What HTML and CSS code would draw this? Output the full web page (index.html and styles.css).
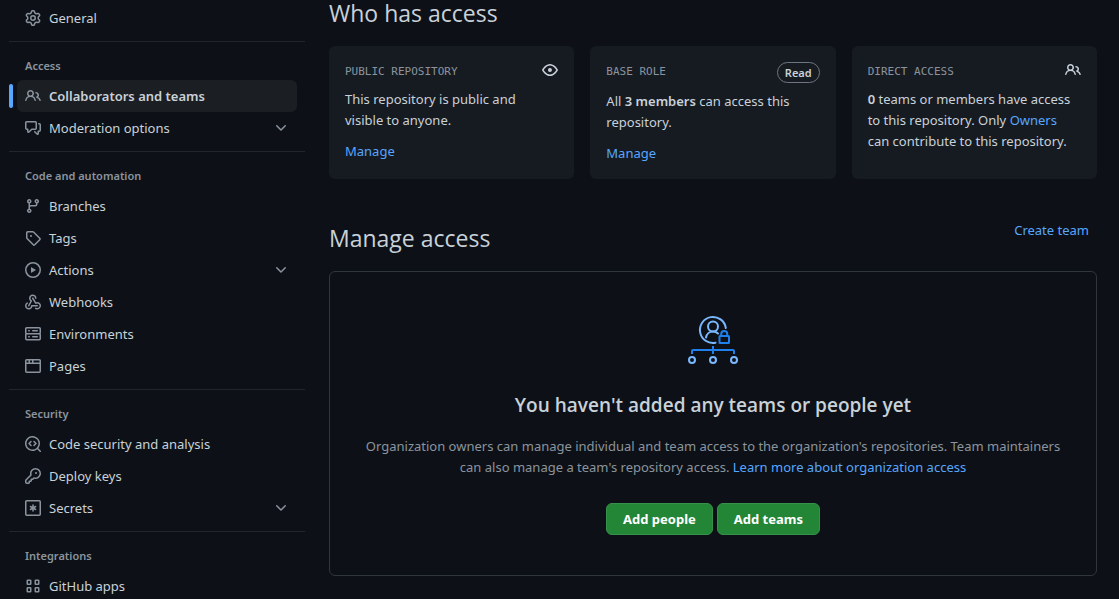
FILE: index.html
```html
<!DOCTYPE html>
<html lang="en">
<head>
<meta charset="utf-8">
<title>Collaborators and teams</title>
<link rel="stylesheet" href="styles.css">
</head>
<body>
<svg class="sprite" aria-hidden="true">
  <symbol id="gear" viewBox="0 0 16 16"><path d="M8 0a8.2 8.2 0 0 1 .701.031C9.444.095 9.99.645 10.16 1.29l.288 1.107c.018.066.079.158.212.224.231.114.454.243.668.386.123.082.233.09.299.071l1.103-.303c.644-.176 1.392.021 1.82.63.27.385.506.792.704 1.218.315.675.111 1.422-.364 1.891l-.814.806c-.049.048-.098.147-.088.294.016.257.016.515 0 .772-.01.147.038.246.088.294l.814.806c.475.469.679 1.216.364 1.891a7.977 7.977 0 0 1-.704 1.217c-.428.61-1.176.807-1.82.63l-1.102-.302c-.067-.019-.177-.011-.3.071a5.909 5.909 0 0 1-.668.386c-.133.066-.194.158-.211.224l-.29 1.106c-.168.646-.715 1.196-1.458 1.26a8.006 8.006 0 0 1-1.402 0c-.743-.064-1.289-.614-1.458-1.26l-.289-1.106c-.018-.066-.079-.158-.212-.224a5.738 5.738 0 0 1-.668-.386c-.123-.082-.233-.09-.299-.071l-1.103.303c-.644.176-1.392-.021-1.82-.63a8.12 8.12 0 0 1-.704-1.218c-.315-.675-.111-1.422.363-1.891l.815-.806c.05-.048.098-.147.088-.294a6.214 6.214 0 0 1 0-.772c.01-.147-.038-.246-.088-.294l-.815-.806C.635 6.045.431 5.298.746 4.623a7.92 7.92 0 0 1 .704-1.217c.428-.61 1.176-.807 1.82-.63l1.102.302c.067.019.177.011.3-.071.214-.143.437-.272.668-.386.133-.066.194-.158.211-.224l.29-1.106C6.009.645 6.556.095 7.299.03 7.53.01 7.764 0 8 0Zm-.571 1.525c-.036.003-.108.036-.137.146l-.289 1.105c-.147.561-.549.967-.998 1.189-.173.086-.34.183-.5.29-.417.278-.97.423-1.529.27l-1.103-.303c-.109-.03-.175.016-.195.045-.22.312-.412.644-.573.99-.014.031-.021.11.059.19l.815.806c.411.406.562.957.53 1.456a4.709 4.709 0 0 0 0 .582c.032.499-.119 1.05-.53 1.456l-.815.806c-.081.08-.073.159-.059.19.162.346.353.677.573.989.02.03.085.076.195.046l1.102-.303c.56-.153 1.113-.008 1.53.27.161.107.328.204.501.29.447.222.85.629.997 1.189l.289 1.105c.029.109.101.143.137.146a6.6 6.6 0 0 0 1.142 0c.036-.003.108-.036.137-.146l.289-1.105c.147-.561.549-.967.998-1.189.173-.086.34-.183.5-.29.417-.278.97-.423 1.529-.27l1.103.303c.109.029.175-.016.195-.045.22-.313.411-.644.573-.99.014-.031.021-.11-.059-.19l-.815-.806c-.411-.406-.562-.957-.53-1.456a4.709 4.709 0 0 0 0-.582c-.032-.499.119-1.05.53-1.456l.815-.806c.081-.08.073-.159.059-.19a6.464 6.464 0 0 0-.573-.989c-.02-.03-.085-.076-.195-.046l-1.102.303c-.56.153-1.113.008-1.53-.27a4.44 4.44 0 0 0-.501-.29c-.447-.222-.85-.629-.997-1.189l-.289-1.105c-.029-.11-.101-.143-.137-.146a6.6 6.6 0 0 0-1.142 0ZM11 8a3 3 0 1 1-6 0 3 3 0 0 1 6 0ZM9.5 8a1.5 1.5 0 1 0-3.001.001A1.5 1.5 0 0 0 9.5 8Z"/></symbol>
  <symbol id="people" viewBox="0 0 16 16"><path d="M2 5.5a3.5 3.5 0 1 1 5.898 2.549 5.508 5.508 0 0 1 3.034 4.084.75.75 0 1 1-1.482.235 4 4 0 0 0-7.9 0 .75.75 0 0 1-1.482-.236A5.507 5.507 0 0 1 3.102 8.05 3.493 3.493 0 0 1 2 5.5ZM11 4a3.001 3.001 0 0 1 2.22 5.018 5.01 5.01 0 0 1 2.56 3.012.749.749 0 0 1-.885.954.752.752 0 0 1-.549-.514 3.507 3.507 0 0 0-2.522-2.372.75.75 0 0 1-.574-.73v-.352a.75.75 0 0 1 .416-.672A1.5 1.5 0 0 0 11 5.5.75.75 0 0 1 11 4Zm-5.5-.5a2 2 0 1 0-.001 3.999A2 2 0 0 0 5.5 3.5Z"/></symbol>
  <symbol id="discussion" viewBox="0 0 16 16"><path d="M1.75 1h8.5c.966 0 1.75.784 1.75 1.75v5.5A1.75 1.75 0 0 1 10.25 10H7.061l-2.574 2.573A1.458 1.458 0 0 1 2 11.543V10h-.25A1.75 1.75 0 0 1 0 8.25v-5.5C0 1.784.784 1 1.75 1ZM1.5 2.75v5.5c0 .138.112.25.25.25h1a.75.75 0 0 1 .75.75v2.19l2.72-2.72a.749.749 0 0 1 .53-.22h3.5a.25.25 0 0 0 .25-.25v-5.5a.25.25 0 0 0-.25-.25h-8.5a.25.25 0 0 0-.25.25Zm13 2a.25.25 0 0 0-.25-.25h-.5a.75.75 0 0 1 0-1.5h.5c.966 0 1.75.784 1.75 1.75v5.5A1.75 1.75 0 0 1 14.25 12H14v1.543a1.458 1.458 0 0 1-2.487 1.03L9.22 12.28a.749.749 0 0 1 .326-1.275.749.749 0 0 1 .734.215l2.22 2.22v-2.19a.75.75 0 0 1 .75-.75h1a.25.25 0 0 0 .25-.25Z"/></symbol>
  <symbol id="branch" viewBox="0 0 16 16"><path d="M9.5 3.25a2.25 2.25 0 1 1 3 2.122V6A2.5 2.5 0 0 1 10 8.5H6a1 1 0 0 0-1 1v1.128a2.251 2.251 0 1 1-1.5 0V5.372a2.25 2.25 0 1 1 1.5 0v1.836A2.493 2.493 0 0 1 6 7h4a1 1 0 0 0 1-1v-.628A2.25 2.25 0 0 1 9.5 3.25Zm-6 0a.75.75 0 1 0 1.5 0 .75.75 0 0 0-1.5 0Zm8.25-.75a.75.75 0 1 0 0 1.5.75.75 0 0 0 0-1.5ZM4.25 12a.75.75 0 1 0 0 1.5.75.75 0 0 0 0-1.5Z"/></symbol>
  <symbol id="tag" viewBox="0 0 16 16"><path d="M1 7.775V2.75C1 1.784 1.784 1 2.75 1h5.025c.464 0 .91.184 1.238.513l6.25 6.25a1.75 1.75 0 0 1 0 2.474l-5.026 5.026a1.75 1.75 0 0 1-2.474 0l-6.25-6.25A1.752 1.752 0 0 1 1 7.775Zm1.5 0c0 .066.026.13.073.177l6.25 6.25a.25.25 0 0 0 .354 0l5.025-5.025a.25.25 0 0 0 0-.354l-6.25-6.25a.25.25 0 0 0-.177-.073H2.75a.25.25 0 0 0-.25.25ZM6 5a1 1 0 1 1 0 2 1 1 0 0 1 0-2Z"/></symbol>
  <symbol id="play" viewBox="0 0 16 16"><path d="M8 0a8 8 0 1 1 0 16A8 8 0 0 1 8 0ZM1.5 8a6.5 6.5 0 1 0 13 0 6.5 6.5 0 0 0-13 0Zm4.879-2.773 4.264 2.559a.25.25 0 0 1 0 .428l-4.264 2.559A.25.25 0 0 1 6 10.559V5.442a.25.25 0 0 1 .379-.215Z"/></symbol>
  <symbol id="webhook" viewBox="0 0 16 16"><path d="M5.5 4.25a2.25 2.25 0 0 1 4.5 0 .75.75 0 0 0 1.5 0 3.75 3.75 0 1 0-6.14 2.889l-2.272 4.258a.75.75 0 0 0 1.324.706L7 7.25a.75.75 0 0 0-.309-1.015A2.25 2.25 0 0 1 5.5 4.25Z"/><path d="M7.364 3.607a.75.75 0 0 1 1.03.257l2.608 4.349a3.75 3.75 0 1 1-.628 6.785.75.75 0 0 1 .752-1.299 2.25 2.25 0 1 0-.033-3.88.75.75 0 0 1-1.03-.256L7.107 4.636a.75.75 0 0 1 .257-1.03Z"/><path d="M2.9 8.776A.75.75 0 0 1 2.625 9.8 2.25 2.25 0 1 0 6 11.75a.75.75 0 0 1 .75-.751h5.5a.75.75 0 0 1 0 1.5H7.425a3.751 3.751 0 1 1-5.55-3.998.75.75 0 0 1 1.024.274Z"/></symbol>
  <symbol id="server" viewBox="0 0 16 16"><path d="M1.75 1h12.5c.966 0 1.75.784 1.75 1.75v4c0 .372-.116.717-.314 1 .198.283.314.628.314 1v4a1.75 1.75 0 0 1-1.75 1.75H1.75A1.75 1.75 0 0 1 0 12.75v-4c0-.358.109-.707.314-1a1.739 1.739 0 0 1-.314-1v-4C0 1.784.784 1 1.75 1ZM1.5 2.75v4c0 .138.112.25.25.25h12.5a.25.25 0 0 0 .25-.25v-4a.25.25 0 0 0-.25-.25H1.75a.25.25 0 0 0-.25.25Zm.25 5.75a.25.25 0 0 0-.25.25v4c0 .138.112.25.25.25h12.5a.25.25 0 0 0 .25-.25v-4a.25.25 0 0 0-.25-.25ZM7 4.75A.75.75 0 0 1 7.75 4h4.5a.75.75 0 0 1 0 1.5h-4.5A.75.75 0 0 1 7 4.75ZM7.75 10h4.5a.75.75 0 0 1 0 1.5h-4.5a.75.75 0 0 1 0-1.5ZM3 4.75A.75.75 0 0 1 3.75 4h.5a.75.75 0 0 1 0 1.5h-.5A.75.75 0 0 1 3 4.75ZM3.75 10h.5a.75.75 0 0 1 0 1.5h-.5a.75.75 0 0 1 0-1.5Z"/></symbol>
  <symbol id="browser" viewBox="0 0 16 16"><path d="M0 2.75C0 1.784.784 1 1.75 1h12.5c.966 0 1.75.784 1.75 1.75v10.5A1.75 1.75 0 0 1 14.25 15H1.75A1.75 1.75 0 0 1 0 13.25ZM14.5 6h-13v7.25c0 .138.112.25.25.25h12.5a.25.25 0 0 0 .25-.25Zm-6-3.5v2h6V2.75a.25.25 0 0 0-.25-.25ZM5 2.5v2h2v-2Zm-3.25 0a.25.25 0 0 0-.25.25V4.5h2v-2Z"/></symbol>
  <symbol id="codescan" viewBox="0 0 16 16"><path d="M8.47 4.97a.75.75 0 0 0 0 1.06L9.94 7.5 8.47 8.97a.75.75 0 1 0 1.06 1.06l2-2a.75.75 0 0 0 0-1.06l-2-2a.75.75 0 0 0-1.06 0ZM6.53 6.03a.75.75 0 0 0-1.06-1.06l-2 2a.75.75 0 0 0 0 1.06l2 2a.75.75 0 1 0 1.06-1.06L5.06 7.5Z"/><path d="M12.246 13.307a7.501 7.501 0 1 1 1.06-1.06l2.474 2.473a.749.749 0 1 1-1.06 1.06ZM1.5 7.5a6.002 6.002 0 0 0 3.608 5.504 6.002 6.002 0 0 0 6.486-1.117.748.748 0 0 1 .292-.293A6 6 0 1 0 1.5 7.5Z"/></symbol>
  <symbol id="key" viewBox="0 0 16 16"><path d="M10.5 0a5.499 5.499 0 1 1-1.288 10.848l-.932.932a.749.749 0 0 1-.53.22H7v.75a.749.749 0 0 1-.22.53l-.5.5a.749.749 0 0 1-.53.22H5v.75a.749.749 0 0 1-.22.53l-.5.5a.749.749 0 0 1-.53.22h-2A1.75 1.75 0 0 1 0 14.25v-2c0-.199.079-.389.22-.53l4.932-4.932A5.5 5.5 0 0 1 10.5 0Zm-4 5.5c-.001.431.069.86.205 1.269a.75.75 0 0 1-.181.768L1.5 12.56v1.69c0 .138.112.25.25.25h1.69l.06-.06v-1.19a.75.75 0 0 1 .75-.75h1.19l.06-.06v-1.19a.75.75 0 0 1 .75-.75h1.19l1.023-1.025a.75.75 0 0 1 .768-.18A4 4 0 1 0 6.5 5.5ZM11 6a1 1 0 1 1 0-2 1 1 0 0 1 0 2Z"/></symbol>
  <symbol id="secret" viewBox="0 0 16 16"><path fill="none" stroke="currentColor" stroke-width="1.5" stroke-linecap="round" d="M1.75.75h12.5a1 1 0 0 1 1 1v12.5a1 1 0 0 1-1 1H1.75a1 1 0 0 1-1-1V1.75a1 1 0 0 1 1-1ZM8 5v6M5.4 6.5l5.2 3M10.6 6.5l-5.2 3"/></symbol>
  <symbol id="apps" viewBox="0 0 16 16"><path fill="none" stroke="currentColor" stroke-width="1.5" stroke-linejoin="round" d="M2.75 2.25h2.5a.5.5 0 0 1 .5.5v3a.5.5 0 0 1-.5.5h-2.5a.5.5 0 0 1-.5-.5v-3a.5.5 0 0 1 .5-.5ZM10.75 2.25h2.5a.5.5 0 0 1 .5.5v3a.5.5 0 0 1-.5.5h-2.5a.5.5 0 0 1-.5-.5v-3a.5.5 0 0 1 .5-.5ZM2.75 9.75h2.5a.5.5 0 0 1 .5.5v3a.5.5 0 0 1-.5.5h-2.5a.5.5 0 0 1-.5-.5v-3a.5.5 0 0 1 .5-.5ZM10.75 9.75h2.5a.5.5 0 0 1 .5.5v3a.5.5 0 0 1-.5.5h-2.5a.5.5 0 0 1-.5-.5v-3a.5.5 0 0 1 .5-.5Z"/></symbol>
  <symbol id="chevron" viewBox="0 0 16 16"><path d="M12.78 5.22a.749.749 0 0 1 0 1.06l-4.25 4.25a.749.749 0 0 1-1.06 0L3.22 6.28a.749.749 0 1 1 1.06-1.06L8 8.939l3.72-3.719a.749.749 0 0 1 1.06 0Z"/></symbol>
  <symbol id="eye" viewBox="0 0 16 16"><path d="M8 2c1.981 0 3.671.992 4.933 2.078 1.27 1.091 2.187 2.345 2.637 3.023a1.62 1.62 0 0 1 0 1.798c-.45.678-1.367 1.932-2.637 3.023C11.67 13.008 9.981 14 8 14c-1.981 0-3.671-.992-4.933-2.078C1.797 10.83.88 9.576.43 8.898a1.62 1.62 0 0 1 0-1.798c.45-.677 1.367-1.931 2.637-3.022C4.33 2.992 6.019 2 8 2ZM1.679 7.932a.12.12 0 0 0 0 .136c.411.622 1.241 1.75 2.366 2.717C5.176 11.758 6.527 12.5 8 12.5c1.473 0 2.825-.742 3.955-1.715 1.124-.967 1.954-2.096 2.366-2.717a.12.12 0 0 0 0-.136c-.412-.621-1.242-1.75-2.366-2.717C10.824 4.242 9.473 3.5 8 3.5c-1.473 0-2.825.742-3.955 1.715-1.124.967-1.954 2.096-2.366 2.717ZM8 10a2 2 0 1 1-.001-3.999A2 2 0 0 1 8 10Z"/></symbol>
</svg>
<div class="page">
  <nav class="sidebar" aria-label="Settings">
    <ul class="nav-list">
      <li><a class="nav-item" href="#"><svg class="icon"><use href="#gear"/></svg>General</a></li>
    </ul>
    <section class="nav-group">
      <h3 class="nav-label">Access</h3>
      <ul class="nav-list">
        <li class="current"><a class="nav-item nav-item-current" href="#" aria-current="page"><svg class="icon"><use href="#people"/></svg>Collaborators and teams</a></li>
        <li><button class="nav-item" type="button"><svg class="icon"><use href="#discussion"/></svg>Moderation options<svg class="icon chevron"><use href="#chevron"/></svg></button></li>
      </ul>
    </section>
    <section class="nav-group">
      <h3 class="nav-label">Code and automation</h3>
      <ul class="nav-list">
        <li><a class="nav-item" href="#"><svg class="icon"><use href="#branch"/></svg>Branches</a></li>
        <li><a class="nav-item" href="#"><svg class="icon"><use href="#tag"/></svg>Tags</a></li>
        <li><button class="nav-item" type="button"><svg class="icon"><use href="#play"/></svg>Actions<svg class="icon chevron"><use href="#chevron"/></svg></button></li>
        <li><a class="nav-item" href="#"><svg class="icon"><use href="#webhook"/></svg>Webhooks</a></li>
        <li><a class="nav-item" href="#"><svg class="icon"><use href="#server"/></svg>Environments</a></li>
        <li><a class="nav-item" href="#"><svg class="icon"><use href="#browser"/></svg>Pages</a></li>
      </ul>
    </section>
    <section class="nav-group">
      <h3 class="nav-label">Security</h3>
      <ul class="nav-list">
        <li><a class="nav-item" href="#"><svg class="icon"><use href="#codescan"/></svg>Code security and analysis</a></li>
        <li><a class="nav-item" href="#"><svg class="icon"><use href="#key"/></svg>Deploy keys</a></li>
        <li><button class="nav-item" type="button"><svg class="icon"><use href="#secret"/></svg>Secrets<svg class="icon chevron"><use href="#chevron"/></svg></button></li>
      </ul>
    </section>
    <section class="nav-group">
      <h3 class="nav-label">Integrations</h3>
      <ul class="nav-list">
        <li><a class="nav-item" href="#"><svg class="icon"><use href="#apps"/></svg>GitHub apps</a></li>
      </ul>
    </section>
  </nav>
  <main class="content">
    <h2 class="title">Who has access</h2>
    <div class="cards">
      <section class="card">
        <header class="card-head"><h3 class="card-label">Public repository</h3><svg class="icon"><use href="#eye"/></svg></header>
        <p class="card-text">This repository is public and visible to anyone.</p>
        <a class="link" href="#">Manage</a>
      </section>
      <section class="card">
        <header class="card-head"><h3 class="card-label">Base role</h3><span class="badge">Read</span></header>
        <p class="card-text">All <strong>3 members</strong> can access this repository.</p>
        <a class="link" href="#">Manage</a>
      </section>
      <section class="card">
        <header class="card-head"><h3 class="card-label">Direct access</h3><svg class="icon"><use href="#people"/></svg></header>
        <p class="card-text"><strong>0</strong> teams or members have access to this repository. Only <a class="link" href="#">Owners</a> can contribute to this repository.</p>
      </section>
    </div>
    <header class="section-head">
      <h2 class="title">Manage access</h2>
      <a class="link" href="#">Create team</a>
    </header>
    <section class="blank">
      <svg class="art" viewBox="0 0 56 56" fill="none" stroke-width="2" aria-hidden="true">
        <g stroke="#79b8ff" stroke-linecap="round">
          <path d="M40.8 16A13 13 0 1 0 30.5 30.7"/>
          <circle cx="28" cy="14.5" r="5"/>
          <path d="M21 25.5c.5-3.5 3.5-6 7-6 2 0 3.7.7 5 2"/>
          <circle cx="7" cy="48" r="3"/><circle cx="28" cy="48" r="3"/><circle cx="49" cy="48" r="3"/>
        </g>
        <g stroke="#1f80ec">
          <rect x="34.5" y="24" width="9.500" height="7" rx=".5"/>
          <path d="M36.25 23.5v-1.500a3 3 0 0 1 6 0v1.500"/>
          <path d="M28 34v8M7 42v-3a1 1 0 0 1 1-1h40a1 1 0 0 1 1 1v3"/>
        </g>
      </svg>
      <h3 class="blank-title">You haven't added any teams or people yet</h3>
      <p class="blank-text">Organization owners can manage individual and team access to the organization's repositories. Team maintainers can also manage a team's repository access. <a class="link" href="#">Learn more about organization access</a></p>
      <div class="actions">
        <button class="btn" type="button">Add people</button>
        <button class="btn" type="button">Add teams</button>
      </div>
    </section>
  </main>
</div>
</body>
</html>
```
FILE: styles.css
```css
* {
  box-sizing: border-box;
}

body {
  margin: 0;
  height: 100vh;
  overflow: hidden;
  background: #0d1117;
  color: #c9d1d9;
  font: 13px/21px "Segoe UI", "Noto Sans", "Open Sans", sans-serif;
}

h2, h3, p, ul {
  margin: 0;
  padding: 0;
}

.sprite {
  display: none;
}

.icon {
  width: 16px;
  height: 16px;
  flex: none;
  fill: currentColor;
}

.link {
  color: #58a6ff;
  text-decoration: none;
}

strong {
  font-weight: 600;
}

.page {
  display: grid;
  grid-template-columns: 296px minmax(0, 1fr);
  gap: 24px;
  padding: 0 22px 0 9px;
}

/* Sidebar */
.sidebar {
  padding-top: 2px;
}

.nav-group {
  margin-top: 7px;
  border-top: 1px solid #21262d;
}

.nav-label {
  padding: 16px 16px 6px;
  color: #8b949e;
  font-size: 11px;
  font-weight: 600;
  line-height: 16px;
}

.nav-list {
  padding: 0 8px;
  list-style: none;
}

.current {
  position: relative;
}

.current::before {
  content: "";
  position: absolute;
  top: 4px;
  left: -8px;
  width: 4px;
  height: 24px;
  border-radius: 6px;
  background: #58a6ff;
}

.nav-item {
  display: flex;
  align-items: center;
  gap: 8px;
  width: 100%;
  height: 32px;
  padding: 0 8px;
  border: 0;
  border-radius: 6px;
  background: none;
  color: #c9d1d9;
  font: inherit;
  text-align: left;
  text-decoration: none;
}

.nav-item-current {
  background: #1b1f23;
  font-weight: 600;
}

.nav-item .icon {
  color: #8b949e;
}

.chevron {
  margin-left: auto;
}

/* Access overview */
.title {
  font-family: "Segoe UI", "Open Sans", sans-serif;
  font-size: 23px;
  font-weight: 400;
  line-height: 27px;
}

.cards {
  display: grid;
  grid-template-columns: repeat(3, minmax(0, 1fr));
  gap: 16px;
  margin-top: 19px;
}

.card {
  padding: 16px 16px 15px;
  border-radius: 6px;
  background: #161b22;
}

.card-head {
  display: flex;
  justify-content: space-between;
  align-items: flex-start;
  margin-bottom: 8px;
}

.card-label {
  color: #8b949e;
  font: 400 11px/19px "DejaVu Sans Mono", monospace;
  text-transform: uppercase;
}

.badge {
  padding: 0 7px;
  border: 1px solid #6e7681;
  border-radius: 12px;
  font-size: 11px;
  font-weight: 600;
  line-height: 19px;
}

.card-text {
  margin-bottom: 10px;
  padding-right: 8px;
}

/* Manage access */
.section-head {
  display: flex;
  justify-content: space-between;
  align-items: flex-start;
  margin: 41px 0 14px;
  padding-right: 8px;
}

.section-head .title {
  line-height: 37px;
}

.blank {
  padding: 40px 32px;
  border: 1px solid #30363d;
  border-radius: 6px;
  text-align: center;
}

.art {
  display: block;
  width: 56px;
  height: 56px;
  margin: 0 auto 22px;
}

.blank-title {
  font-family: "Segoe UI", "Open Sans", sans-serif;
  font-size: 19px;
  font-weight: 600;
  line-height: 30px;
}

.blank-text {
  margin: 16px 0 25px;
  color: #8b949e;
}

.actions {
  display: flex;
  justify-content: center;
  gap: 4px;
}

.btn {
  height: 32px;
  padding: 0 16px;
  border: 1px solid #37914a;
  border-radius: 6px;
  background: #238636;
  color: #fff;
  font: inherit;
  font-weight: 700;
}
```
